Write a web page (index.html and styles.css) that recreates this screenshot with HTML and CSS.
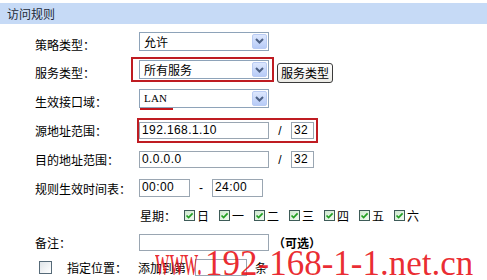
FILE: index.html
```html
<!DOCTYPE html>
<html>

<head>
  <meta charset="utf-8">
  <link rel="stylesheet" href="styles.css">
</head>

<body>
  <div class="panel">
    <div class="panel-title">访问规则</div>

    <div class="rule-form">

      <div class="row row-policy">
        <div class="row-label">策略类型：</div>
        <div class="select select-raised">
          <span class="select-value">允许</span>
          <span class="select-arrow">
            <svg width="13" height="14" viewBox="0 0 13 14"><polyline points="3,5 6.5,8.5 10,5" fill="none" stroke="#4d6185" stroke-width="2"/></svg>
          </span>
        </div>
      </div>

      <div class="row row-service">
        <div class="row-label">服务类型：</div>
        <div class="mark mark-service">
          <div class="select">
            <span class="select-value">所有服务</span>
            <span class="select-arrow">
              <svg width="13" height="14" viewBox="0 0 13 14"><polyline points="3,5 6.5,8.5 10,5" fill="none" stroke="#4d6185" stroke-width="2"/></svg>
            </span>
          </div>
        </div>
        <button class="btn">服务类型</button>
      </div>

      <div class="row">
        <div class="row-label">生效接口域：</div>
        <div class="select select-raised select-lan">
          <span class="select-value select-value-serif">LAN</span>
          <span class="select-arrow">
            <svg width="13" height="14" viewBox="0 0 13 14"><polyline points="3,5 6.5,8.5 10,5" fill="none" stroke="#4d6185" stroke-width="2"/></svg>
          </span>
        </div>
      </div>

      <div class="row">
        <div class="row-label">源地址范围：</div>
        <div class="mark mark-source">
          <div class="textbox textbox-wide">192.168.1.10</div>
          <span class="sep">/</span>
          <div class="textbox textbox-mask">32</div>
        </div>
      </div>

      <div class="row">
        <div class="row-label">目的地址范围：</div>
        <div class="textbox textbox-wide">0.0.0.0</div>
        <span class="sep">/</span>
        <div class="textbox textbox-mask">32</div>
      </div>

      <div class="row row-time">
        <div class="row-label">规则生效时间表：</div>
        <div class="textbox textbox-time">00:00</div>
        <span class="sep">-</span>
        <div class="textbox textbox-time">24:00</div>
      </div>

      <div class="row row-week">
        <div class="row-label"></div>
        <span class="week-label">星期：</span>
        <div class="week-days">
          <label class="day"><span class="check"><svg width="9" height="9" viewBox="0 0 9 9"><polyline points="1.5,4.5 3.6,6.6 7.6,2.4" fill="none" stroke="#22a022" stroke-width="1.7"/></svg></span>日</label>
          <label class="day"><span class="check"><svg width="9" height="9" viewBox="0 0 9 9"><polyline points="1.5,4.5 3.6,6.6 7.6,2.4" fill="none" stroke="#22a022" stroke-width="1.7"/></svg></span>一</label>
          <label class="day"><span class="check"><svg width="9" height="9" viewBox="0 0 9 9"><polyline points="1.5,4.5 3.6,6.6 7.6,2.4" fill="none" stroke="#22a022" stroke-width="1.7"/></svg></span>二</label>
          <label class="day"><span class="check"><svg width="9" height="9" viewBox="0 0 9 9"><polyline points="1.5,4.5 3.6,6.6 7.6,2.4" fill="none" stroke="#22a022" stroke-width="1.7"/></svg></span>三</label>
          <label class="day"><span class="check"><svg width="9" height="9" viewBox="0 0 9 9"><polyline points="1.5,4.5 3.6,6.6 7.6,2.4" fill="none" stroke="#22a022" stroke-width="1.7"/></svg></span>四</label>
          <label class="day"><span class="check"><svg width="9" height="9" viewBox="0 0 9 9"><polyline points="1.5,4.5 3.6,6.6 7.6,2.4" fill="none" stroke="#22a022" stroke-width="1.7"/></svg></span>五</label>
          <label class="day"><span class="check"><svg width="9" height="9" viewBox="0 0 9 9"><polyline points="1.5,4.5 3.6,6.6 7.6,2.4" fill="none" stroke="#22a022" stroke-width="1.7"/></svg></span>六</label>
        </div>
      </div>

      <div class="row row-note">
        <div class="row-label">备注：</div>
        <div class="textbox textbox-wide"></div>
        <span class="optional">（可选）</span>
      </div>

      <div class="row row-position">
        <span class="check-empty"></span>
        <div class="row-label row-label-short">指定位置：</div>
        <span>添加到第</span>
        <div class="textbox textbox-pos"></div>
        <span class="pos-unit">条</span>
      </div>

    </div>
  </div>

  <div class="watermark"><span class="watermark-www">www.</span>192-168-1-1.net.cn</div>
</body>

</html>
```

FILE: styles.css
```css
* {
  margin: 0;
  padding: 0;
  box-sizing: border-box;
}

body {
  position: relative;
  width: 487px;
  height: 280px;
  overflow: hidden;
  background: #fff;
  color: #000;
  font-family: "Noto Sans CJK SC", sans-serif;
  font-size: 12px;
}

.panel-title {
  margin-top: 3px;
  height: 21px;
  line-height: 21px;
  padding-left: 7px;
  background: #c6daf6;
  color: #1e2a38;
}

.rule-form {
  padding-top: 6px;
}

.row {
  display: flex;
  align-items: center;
  height: 29px;
  padding-left: 35px;
  white-space: nowrap;
}

.row-policy,
.row-time,
.row-note {
  height: 28px;
}

.row-week {
  height: 26px;
}

.row-position {
  height: 22px;
  padding-left: 39px;
}

.row-label {
  width: 104px;
  flex-shrink: 0;
}

.row-label-short {
  width: 71px;
  margin-left: 15px;
}

/* select boxes */

.select {
  display: flex;
  align-items: center;
  justify-content: space-between;
  width: 130px;
  height: 19px;
  padding: 1px;
  border: 1px solid #8ea3b9;
  background: #fff;
}

.select-raised {
  margin-bottom: 6px;
}

.select-value {
  padding-left: 3px;
  line-height: 15px;
}

.select-value-serif {
  font-family: "Liberation Serif", serif;
  font-size: 11px;
  letter-spacing: 0.2px;
}

.select-arrow {
  display: flex;
  align-items: center;
  justify-content: center;
  width: 15px;
  height: 15px;
  border: 1px solid #b9cbf3;
  border-radius: 2px;
  background: linear-gradient(#dde7fd, #b7cbf7);
}

.select-lan {
  position: relative;
}

.select-lan::after {
  content: "";
  position: absolute;
  left: 0;
  bottom: -3px;
  width: 33px;
  height: 2px;
  background: #c4161c;
}

/* red annotation frames */

.mark {
  display: flex;
  align-items: center;
  border: 2px solid #bf1c22;
}

.mark-service {
  margin-left: -8px;
  margin-bottom: 6px;
  padding: 1px 3px 1px 6px;
}

.mark-source {
  margin-left: -2px;
  padding: 2px 2px 2px 0;
}

.btn {
  height: 20px;
  margin-left: 3px;
  padding: 0 3px;
  border: 1px solid #3b3b3b;
  border-radius: 3px;
  background: linear-gradient(#ffffff, #ecebe6);
  color: #000;
  font-family: "Noto Sans CJK SC", sans-serif;
  font-size: 12px;
  line-height: 18px;
}

/* text boxes */

.textbox {
  height: 17px;
  padding-left: 2px;
  border: 1px solid #9aa6b2;
  background: #fff;
  font-family: "Liberation Sans", sans-serif;
  font-size: 12px;
  line-height: 15px;
  letter-spacing: 0.4px;
}

.textbox-wide {
  width: 130px;
}

.textbox-mask {
  width: 23px;
}

.textbox-time {
  width: 51px;
  height: 18px;
}

.textbox-pos {
  width: 52px;
  margin-left: 9px;
}

.sep {
  width: 22px;
  text-align: center;
  font-family: "Liberation Sans", sans-serif;
}

/* weekdays */

.week-label {
  width: 44px;
  margin-left: 1px;
}

.week-days {
  display: flex;
}

.day {
  display: flex;
  align-items: center;
  width: 35px;
}

.check {
  display: flex;
  align-items: center;
  justify-content: center;
  width: 11px;
  height: 11px;
  margin-right: 2px;
  border: 1px solid #3e5b58;
  background: linear-gradient(135deg, #cfe8cf, #f2fbf2);
}

.check-empty {
  width: 13px;
  height: 13px;
  border: 1px solid #566a78;
  background: linear-gradient(135deg, #dfe4e8, #ffffff);
  flex-shrink: 0;
}

.optional {
  margin-left: 4px;
  font-weight: bold;
}

.pos-unit {
  margin-left: 8px;
}

/* watermark over the bottom row */

.watermark {
  position: absolute;
  left: 155px;
  top: 246px;
  color: rgba(232, 24, 32, 0.92);
  font-family: "Liberation Serif", serif;
  font-size: 35px;
  line-height: 1;
  white-space: nowrap;
}

.watermark-www {
  display: inline-block;
  width: 50px;
  transform: scale(0.57, 1.25);
  transform-origin: left 29px;
}
```
